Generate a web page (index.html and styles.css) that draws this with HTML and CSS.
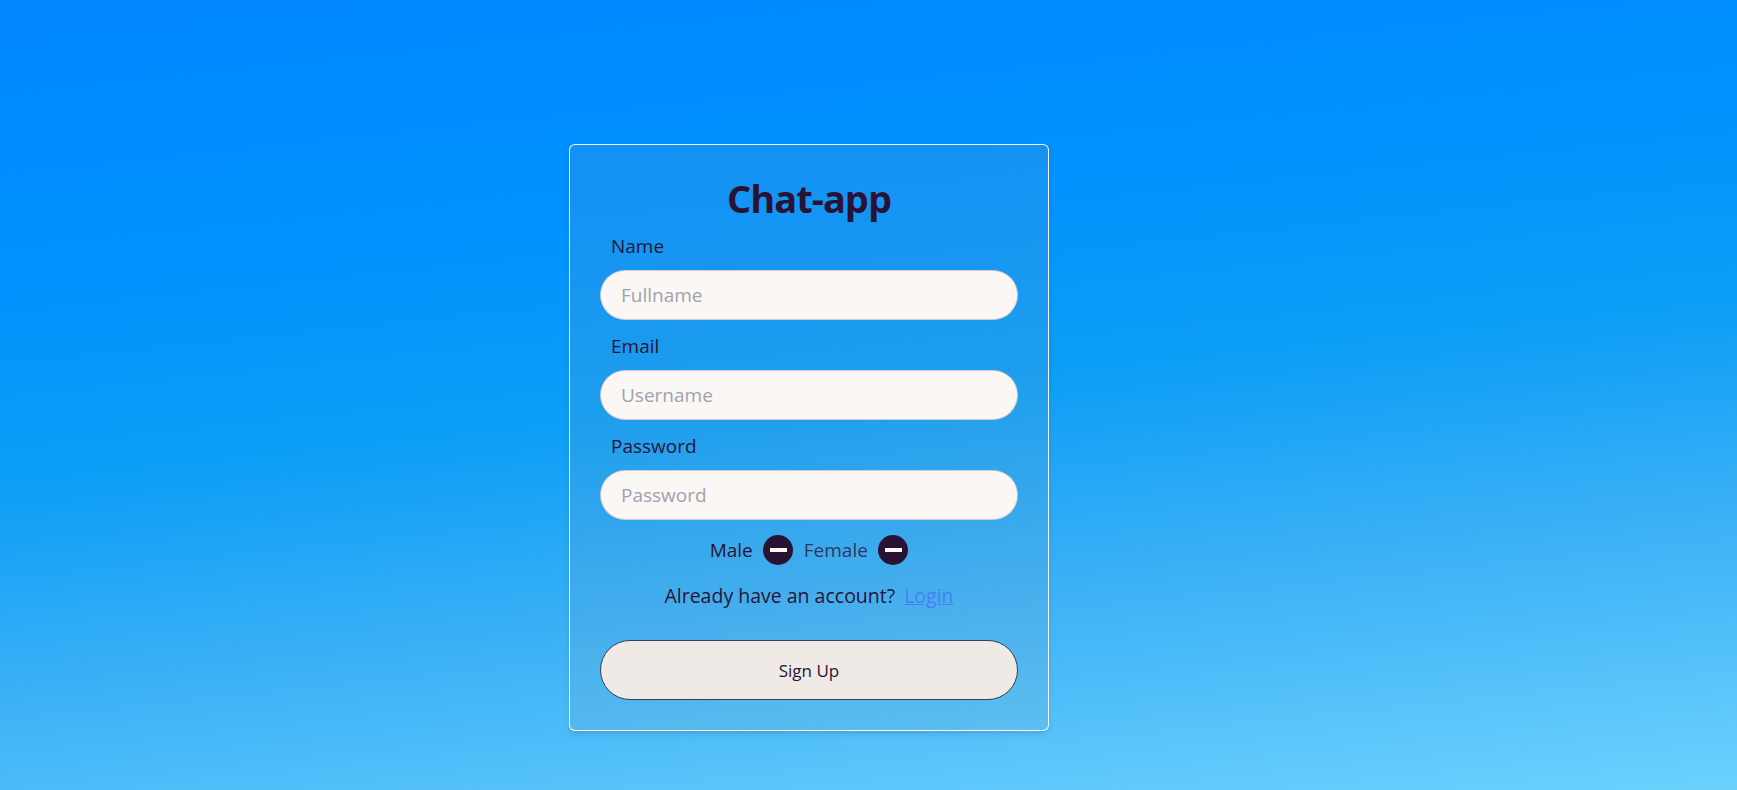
FILE: index.html
```html
<!DOCTYPE html>
<html lang="en">
<head>
<meta charset="utf-8">
<title>Chat-app</title>
<link rel="stylesheet" href="styles.css">
</head>
<body>
<main class="page">
  <div class="card">
    <h1 class="title">Chat-app</h1>
    <form class="form">
      <div class="field">
        <label class="label">Name</label>
        <input class="input" type="text" placeholder="Fullname">
      </div>
      <div class="field">
        <label class="label">Email</label>
        <input class="input" type="text" placeholder="Username">
      </div>
      <div class="field">
        <label class="label">Password</label>
        <input class="input" type="password" placeholder="Password">
      </div>
      <div class="gender">
        <span class="gender-text">Male</span>
        <span class="check"><span class="dash"></span></span>
        <span class="gender-text female">Female</span>
        <span class="check"><span class="dash"></span></span>
      </div>
      <p class="login-line">Already have an account?<a class="login-link" href="#">Login</a></p>
      <button class="btn" type="button">Sign Up</button>
    </form>
  </div>
</main>
</body>
</html>
```

FILE: styles.css
```css
* { box-sizing: border-box; }
html, body { margin: 0; padding: 0; height: 100%; }
body {
  font-family: "Open Sans", "Noto Sans", sans-serif;
  color: #291334;
  background: linear-gradient(174deg, #0086ff 0%, #0292fd 30%, #0d9ef6 50%, #3cb1f6 72%, #5bc6fb 90%, #6bd2fd 100%);
  overflow: hidden;
}
.page {
  display: flex;
  justify-content: center;
  align-items: flex-start;
  height: 790px;
  padding-top: 144px;
  padding-right: 119px;
}
.card {
  width: 480px;
  padding: 29px 30px 30px;
  border: 1px solid rgba(255,255,255,0.95);
  border-radius: 6px;
  background: rgba(156,163,175,0.12);
  box-shadow: 0 4px 6px -1px rgba(0,0,0,0.1), 0 2px 4px -2px rgba(0,0,0,0.1);
}
.title {
  margin: 0;
  text-align: center;
  font-size: 38px;
  line-height: 48px;
  font-weight: 700;
  letter-spacing: -1px;
  color: #291334;
}
.form {
  display: flex;
  flex-direction: column;
  margin-top: 10px;
}
.field {
  display: flex;
  flex-direction: column;
  gap: 10px;
  margin-bottom: 12px;
}
.label {
  display: block;
  padding-left: 11px;
  font-size: 19px;
  line-height: 28px;
  color: #291334;
}
.input {
  width: 100%;
  height: 50px;
  padding: 0 20px;
  border: 1px solid rgba(41,19,52,0.2);
  border-radius: 25px;
  background: #faf7f5;
  font-family: inherit;
  font-size: 19px;
  color: #291334;
  outline: none;
}
.input::placeholder { color: #9fa2af; }
.gender {
  display: flex;
  justify-content: center;
  align-items: center;
  gap: 10.5px;
  height: 30px;
  margin-top: 3px;
}
.gender-text {
  font-size: 19px;
  line-height: 28px;
  color: #291334;
}
.gender-text.female { color: #33345f; }
.check {
  width: 30px;
  height: 30px;
  border-radius: 50%;
  background: #291334;
  display: flex;
  align-items: center;
  justify-content: center;
}
.dash {
  width: 17px;
  height: 4px;
  background: #faf7f5;
}
.login-line {
  margin: 17px 0 0;
  text-align: center;
  font-size: 19.5px;
  line-height: 28px;
  color: #291334;
}
.login-link {
  margin-left: 9px;
  color: #4a7ef5;
  text-decoration: underline;
}
.btn {
  margin-top: 30px;
  width: 100%;
  height: 60px;
  border: 1px solid #334155;
  border-radius: 30px;
  background: #efeae6;
  font-family: inherit;
  font-size: 17px;
  font-weight: 500;
  color: #291334;
  cursor: pointer;
}
```
